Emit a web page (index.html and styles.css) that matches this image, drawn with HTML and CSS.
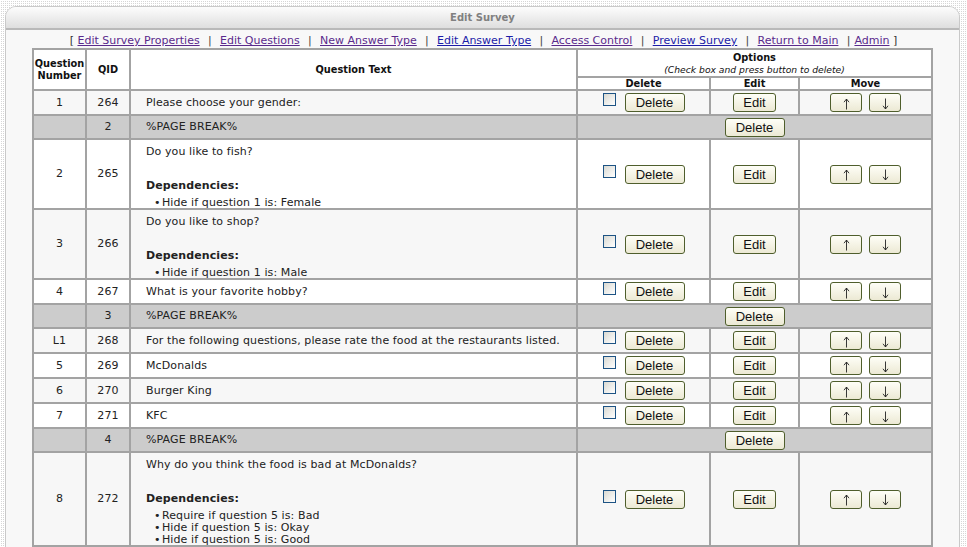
FILE: index.html
```html
<!DOCTYPE html>
<html>
<head>
<meta charset="utf-8">
<title>Edit Survey</title>
<link rel="stylesheet" href="styles.css">
</head>
<body>
<div class="panel">
  <div class="panel-head">Edit Survey</div>
  <div class="panel-body">
    <div class="nav">[ <a class="vis">Edit Survey Properties</a><span class="sep">|</span><a class="vis">Edit Questions</a><span class="sep">|</span><a class="vis">New Answer Type</a><span class="sep">|</span><a class="new">Edit Answer Type</a><span class="sep">|</span><a class="vis">Access Control</a><span class="sep">|</span><a class="new">Preview Survey</a><span class="sep">|</span><a class="vis">Return to Main</a><span class="sep last">|</span><a class="vis">Admin</a> ]</div>
    <table class="grid">
      <colgroup>
        <col class="w-num"><col class="w-qid"><col class="w-text"><col class="w-del"><col class="w-edit"><col class="w-move">
      </colgroup>
      <thead>
        <tr class="h1">
          <th rowspan="2">Question<br>Number</th>
          <th rowspan="2">QID</th>
          <th rowspan="2">Question Text</th>
          <th colspan="3" class="opts">Options<br><span class="hint">(Check box and press button to delete)</span></th>
        </tr>
        <tr class="h2"><th>Delete</th><th>Edit</th><th>Move</th></tr>
      </thead>
      <tbody>
        <tr class="odd">
          <td class="num">1</td><td class="num">264</td><td class="qt">Please choose your gender:</td>
          <td class="ops"><span class="delbox"><span class="cb"></span><button class="btn bdel">Delete</button></span></td>
          <td class="ops"><button class="btn bedit">Edit</button></td>
          <td class="ops"><span class="movebox"><button class="btn barr" aria-label="Move up"><svg class="arr" viewBox="0 0 7 12"><path d="M3.5 11.5V1M1 4.2L3.5 1L6 4.2"/></svg></button><button class="btn barr" aria-label="Move down"><svg class="arr" viewBox="0 0 7 12"><path d="M3.5 0.5V11M1 7.8L3.5 11L6 7.8"/></svg></button></span></td>
        </tr>
        <tr class="pb">
          <td class="num"></td><td class="num">2</td><td class="qt">%PAGE BREAK%</td>
          <td class="ops" colspan="3"><button class="btn bdel">Delete</button></td>
        </tr>
        <tr class="even">
          <td class="num">2</td><td class="num">265</td>
          <td class="qt"><div class="q">Do you like to fish?</div><div class="deps">Dependencies:</div><ul class="deplist"><li>Hide if question 1 is: Female</li></ul></td>
          <td class="ops"><span class="delbox"><span class="cb"></span><button class="btn bdel">Delete</button></span></td>
          <td class="ops"><button class="btn bedit">Edit</button></td>
          <td class="ops"><span class="movebox"><button class="btn barr" aria-label="Move up"><svg class="arr" viewBox="0 0 7 12"><path d="M3.5 11.5V1M1 4.2L3.5 1L6 4.2"/></svg></button><button class="btn barr" aria-label="Move down"><svg class="arr" viewBox="0 0 7 12"><path d="M3.5 0.5V11M1 7.8L3.5 11L6 7.8"/></svg></button></span></td>
        </tr>
        <tr class="odd">
          <td class="num">3</td><td class="num">266</td>
          <td class="qt"><div class="q">Do you like to shop?</div><div class="deps">Dependencies:</div><ul class="deplist"><li>Hide if question 1 is: Male</li></ul></td>
          <td class="ops"><span class="delbox"><span class="cb"></span><button class="btn bdel">Delete</button></span></td>
          <td class="ops"><button class="btn bedit">Edit</button></td>
          <td class="ops"><span class="movebox"><button class="btn barr" aria-label="Move up"><svg class="arr" viewBox="0 0 7 12"><path d="M3.5 11.5V1M1 4.2L3.5 1L6 4.2"/></svg></button><button class="btn barr" aria-label="Move down"><svg class="arr" viewBox="0 0 7 12"><path d="M3.5 0.5V11M1 7.8L3.5 11L6 7.8"/></svg></button></span></td>
        </tr>
        <tr class="even">
          <td class="num">4</td><td class="num">267</td><td class="qt">What is your favorite hobby?</td>
          <td class="ops"><span class="delbox"><span class="cb"></span><button class="btn bdel">Delete</button></span></td>
          <td class="ops"><button class="btn bedit">Edit</button></td>
          <td class="ops"><span class="movebox"><button class="btn barr" aria-label="Move up"><svg class="arr" viewBox="0 0 7 12"><path d="M3.5 11.5V1M1 4.2L3.5 1L6 4.2"/></svg></button><button class="btn barr" aria-label="Move down"><svg class="arr" viewBox="0 0 7 12"><path d="M3.5 0.5V11M1 7.8L3.5 11L6 7.8"/></svg></button></span></td>
        </tr>
        <tr class="pb">
          <td class="num"></td><td class="num">3</td><td class="qt">%PAGE BREAK%</td>
          <td class="ops" colspan="3"><button class="btn bdel">Delete</button></td>
        </tr>
        <tr class="odd">
          <td class="num">L1</td><td class="num">268</td><td class="qt">For the following questions, please rate the food at the restaurants listed.</td>
          <td class="ops"><span class="delbox"><span class="cb"></span><button class="btn bdel">Delete</button></span></td>
          <td class="ops"><button class="btn bedit">Edit</button></td>
          <td class="ops"><span class="movebox"><button class="btn barr" aria-label="Move up"><svg class="arr" viewBox="0 0 7 12"><path d="M3.5 11.5V1M1 4.2L3.5 1L6 4.2"/></svg></button><button class="btn barr" aria-label="Move down"><svg class="arr" viewBox="0 0 7 12"><path d="M3.5 0.5V11M1 7.8L3.5 11L6 7.8"/></svg></button></span></td>
        </tr>
        <tr class="even">
          <td class="num">5</td><td class="num">269</td><td class="qt">McDonalds</td>
          <td class="ops"><span class="delbox"><span class="cb"></span><button class="btn bdel">Delete</button></span></td>
          <td class="ops"><button class="btn bedit">Edit</button></td>
          <td class="ops"><span class="movebox"><button class="btn barr" aria-label="Move up"><svg class="arr" viewBox="0 0 7 12"><path d="M3.5 11.5V1M1 4.2L3.5 1L6 4.2"/></svg></button><button class="btn barr" aria-label="Move down"><svg class="arr" viewBox="0 0 7 12"><path d="M3.5 0.5V11M1 7.8L3.5 11L6 7.8"/></svg></button></span></td>
        </tr>
        <tr class="odd">
          <td class="num">6</td><td class="num">270</td><td class="qt">Burger King</td>
          <td class="ops"><span class="delbox"><span class="cb"></span><button class="btn bdel">Delete</button></span></td>
          <td class="ops"><button class="btn bedit">Edit</button></td>
          <td class="ops"><span class="movebox"><button class="btn barr" aria-label="Move up"><svg class="arr" viewBox="0 0 7 12"><path d="M3.5 11.5V1M1 4.2L3.5 1L6 4.2"/></svg></button><button class="btn barr" aria-label="Move down"><svg class="arr" viewBox="0 0 7 12"><path d="M3.5 0.5V11M1 7.8L3.5 11L6 7.8"/></svg></button></span></td>
        </tr>
        <tr class="even">
          <td class="num">7</td><td class="num">271</td><td class="qt">KFC</td>
          <td class="ops"><span class="delbox"><span class="cb"></span><button class="btn bdel">Delete</button></span></td>
          <td class="ops"><button class="btn bedit">Edit</button></td>
          <td class="ops"><span class="movebox"><button class="btn barr" aria-label="Move up"><svg class="arr" viewBox="0 0 7 12"><path d="M3.5 11.5V1M1 4.2L3.5 1L6 4.2"/></svg></button><button class="btn barr" aria-label="Move down"><svg class="arr" viewBox="0 0 7 12"><path d="M3.5 0.5V11M1 7.8L3.5 11L6 7.8"/></svg></button></span></td>
        </tr>
        <tr class="pb">
          <td class="num"></td><td class="num">4</td><td class="qt">%PAGE BREAK%</td>
          <td class="ops" colspan="3"><button class="btn bdel">Delete</button></td>
        </tr>
        <tr class="odd">
          <td class="num">8</td><td class="num">272</td>
          <td class="qt"><div class="q">Why do you think the food is bad at McDonalds?</div><div class="deps">Dependencies:</div><ul class="deplist"><li>Require if question 5 is: Bad</li><li>Hide if question 5 is: Okay</li><li>Hide if question 5 is: Good</li></ul></td>
          <td class="ops"><span class="delbox"><span class="cb"></span><button class="btn bdel">Delete</button></span></td>
          <td class="ops"><button class="btn bedit">Edit</button></td>
          <td class="ops"><span class="movebox"><button class="btn barr" aria-label="Move up"><svg class="arr" viewBox="0 0 7 12"><path d="M3.5 11.5V1M1 4.2L3.5 1L6 4.2"/></svg></button><button class="btn barr" aria-label="Move down"><svg class="arr" viewBox="0 0 7 12"><path d="M3.5 0.5V11M1 7.8L3.5 11L6 7.8"/></svg></button></span></td>
        </tr>
      </tbody>
    </table>
  </div>
</div>
</body>
</html>
```

FILE: styles.css
```css
html, body {
  margin: 0;
  height: 547px;
  overflow: hidden;
}
body {
  padding: 6px 7px 0 5px;
  box-sizing: border-box;
  background-color: #ffffff;
  background-image: conic-gradient(from 90deg at 1px 1px, #d6d6d6 90deg, #ffffff 0);
  background-size: 2px 2px;
  font-family: "DejaVu Sans", Verdana, sans-serif;
  color: #222;
}
.panel {
  border: 1px solid #c9c9c9;
  border-radius: 11px 11px 0 0;
  background: #f8f8f8;
  height: 100%;
  overflow: hidden;
}
.panel-head {
  height: 21px;
  line-height: 22px;
  text-align: center;
  font-size: 10px;
  font-weight: bold;
  color: #808080;
  background: linear-gradient(#fdfdfd, #dedede);
  border-bottom: 2px solid #b9b9b9;
}
.panel-body {
  padding: 3px 0 0;
}
.nav {
  text-align: center;
  font-size: 11px;
  line-height: 15px;
  color: #333;
  padding-left: 2px;
  margin-bottom: 0;
}
.nav a {
  text-decoration: underline;
  cursor: pointer;
}
.nav a.vis { color: #5a2a8c; }
.nav a.new { color: #1c1ca8; }
.nav .sep { margin: 0 8.3px; color: #444; }
.nav .sep.last { margin: 0 4px 0 8.3px; }

.grid {
  margin: 0 auto;
  width: 899px;
  table-layout: fixed;
  border-collapse: collapse;
  font-size: 11px;
  letter-spacing: 0.1px;
  color: #222;
}
.w-num { width: 53px; }
.w-qid { width: 44px; }
.w-text { width: 447px; }
.w-del { width: 133px; }
.w-edit { width: 89px; }
.w-move { width: 133px; }

.grid th, .grid td {
  border: 2px solid #a3a3a3;
  padding: 0;
}
.grid th {
  background: #ffffff;
  font-weight: bold;
  font-size: 9.8px;
  letter-spacing: 0;
  line-height: 12px;
  color: #111;
}
.grid .h1 th { height: 25px; }
.grid .h1 th.opts { vertical-align: middle; padding-top: 1px; }
.grid .hint {
  font-weight: normal;
  font-style: italic;
  font-size: 9.2px;
}
.grid .h2 th { height: 11px; line-height: 11px; }

.grid td { height: 23px; vertical-align: middle; line-height: 12px; }
.grid tr.odd td { background: #f7f7f7; }
.grid tr.even td { background: #ffffff; }
.grid tr.pb td { background: #cccccc; height: 22px; }

.grid td.num { text-align: center; }
.grid td.qt { padding: 0 8px 0 15px; }
.grid td.qt .q { padding-top: 6px; }
.grid .deps { font-weight: bold; margin-top: 22px; }
.grid .deplist {
  list-style: none;
  margin: 5px 0 -1px;
  padding: 0 0 0 8px;
}
.grid .deplist li::before {
  content: "•";
  display: inline-block;
  width: 8px;
}
.grid td.ops { text-align: center; }

.delbox, .movebox {
  display: inline-flex;
  align-items: flex-start;
  vertical-align: middle;
}
.delbox { gap: 9px; }
.movebox { gap: 7px; }
.cb {
  width: 11px;
  height: 11px;
  border: 1px solid #1d5384;
  background: linear-gradient(135deg, #d9d9d2, #ffffff);
}
.btn {
  height: 19px;
  padding: 0;
  border: 1px solid #4f5e2c;
  border-radius: 3px;
  background: linear-gradient(#fefef7, #ece9d4);
  font-family: "Liberation Sans", Arial, sans-serif;
  font-size: 13px;
  letter-spacing: 0;
  line-height: 17px;
  color: #111;
  vertical-align: middle;
}
.bdel { width: 60px; }
.bedit { width: 43px; }
.barr {
  width: 32px;
  display: inline-flex;
  align-items: center;
  justify-content: center;
}
.arr {
  width: 7px;
  height: 12px;
  margin-top: 2px;
  fill: none;
  stroke: #222;
  stroke-width: 0.9;
}
```
